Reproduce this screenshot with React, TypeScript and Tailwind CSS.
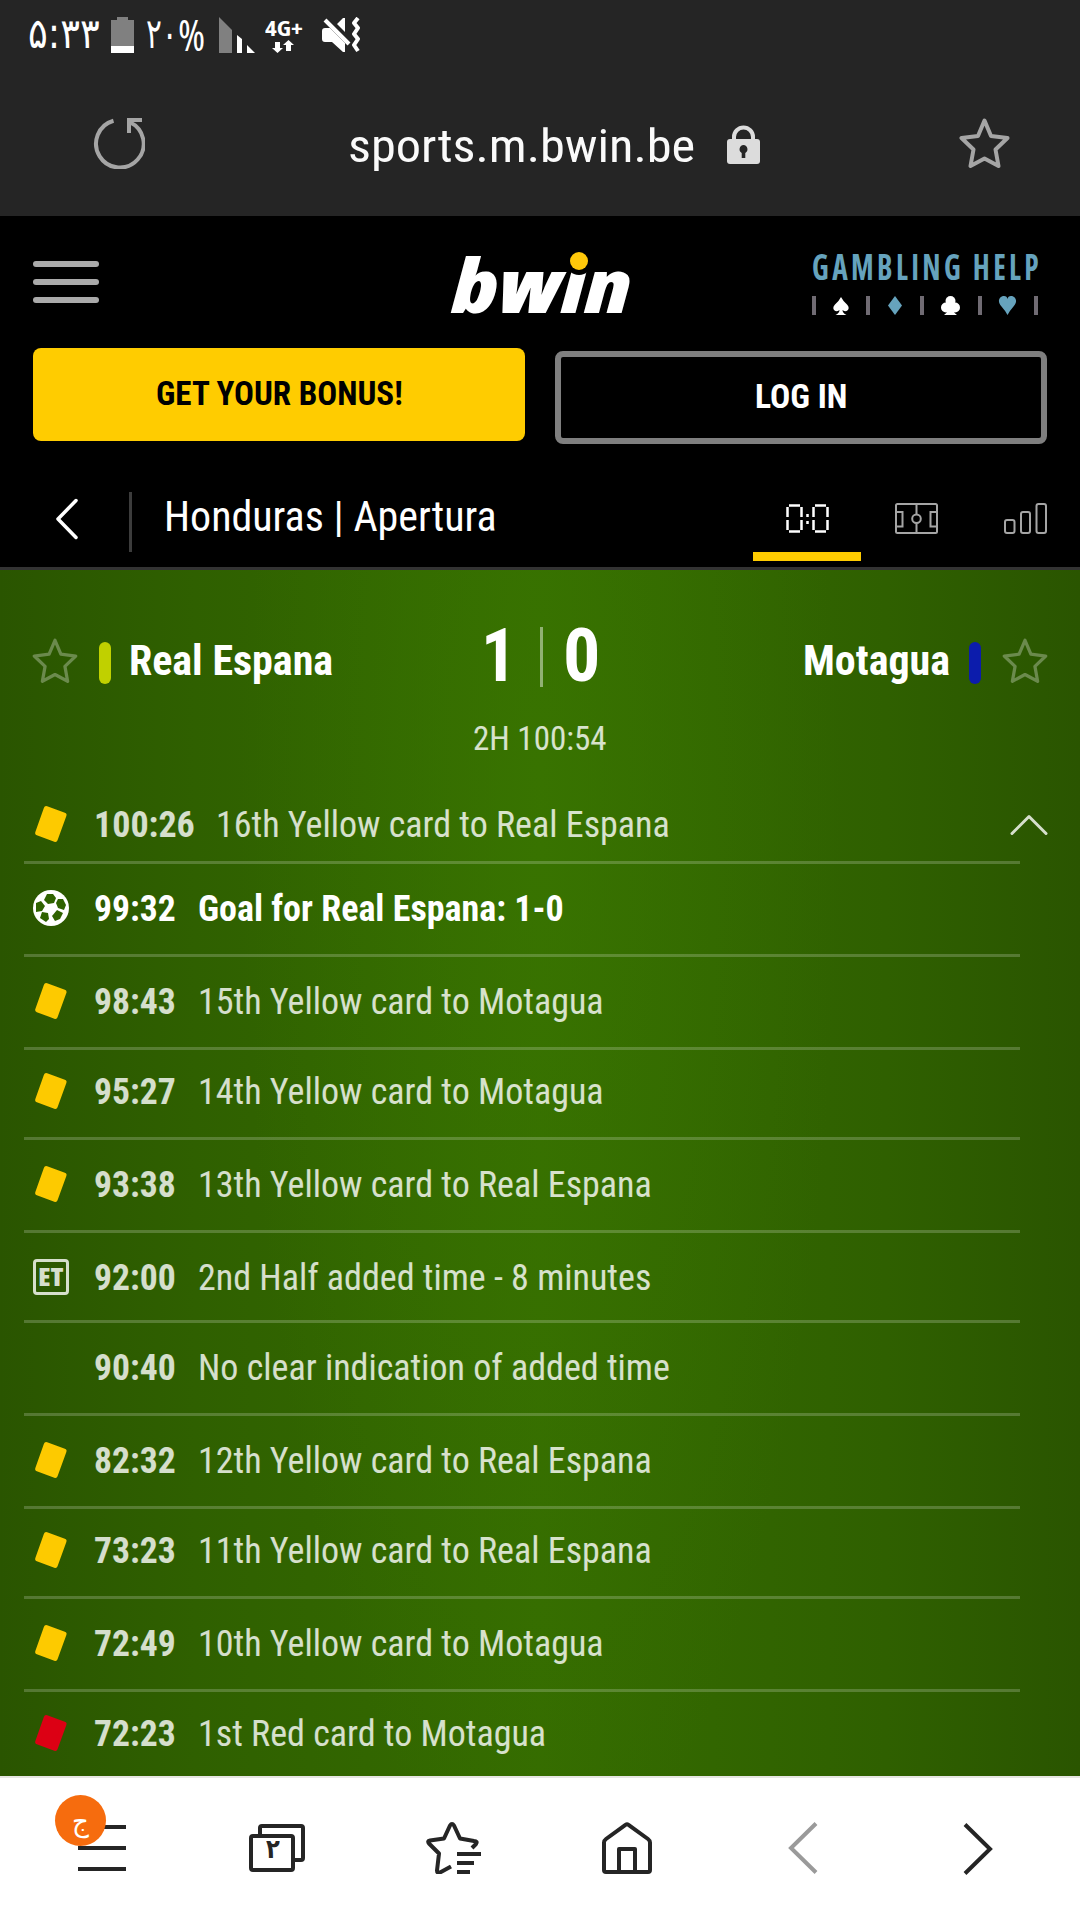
import { useLayoutEffect, useRef, useState } from "react";
import type { ReactNode } from "react";
import clsx from "clsx";

type EventType = "yellow" | "red" | "goal" | "et" | "none";

type MatchEvent = {
  time: string;
  text: string;
  type: EventType;
  width: number;
  row: string;
};

const events: MatchEvent[] = [
  { time: "99:32", text: "Goal for Real Espana: 1-0", type: "goal", width: 366, row: "h-[93px] border-b-[3px] pt-[15px]" },
  { time: "98:43", text: "15th Yellow card to Motagua", type: "yellow", width: 406, row: "h-[93px] border-b-[3px] pt-[15px]" },
  { time: "95:27", text: "14th Yellow card to Motagua", type: "yellow", width: 406, row: "h-[90px] border-b-[3px] pt-[12px]" },
  { time: "93:38", text: "13th Yellow card to Real Espana", type: "yellow", width: 454, row: "h-[93px] border-b-[3px] pt-[15px]" },
  { time: "92:00", text: "2nd Half added time - 8 minutes", type: "et", width: 453, row: "h-[90px] border-b-[3px] pt-[15px]" },
  { time: "90:40", text: "No clear indication of added time", type: "none", width: 472, row: "h-[93px] border-b-[3px] pt-[15px]" },
  { time: "82:32", text: "12th Yellow card to Real Espana", type: "yellow", width: 454, row: "h-[93px] border-b-[3px] pt-[15px]" },
  { time: "73:23", text: "11th Yellow card to Real Espana", type: "yellow", width: 454, row: "h-[90px] border-b-[3px] pt-[12px]" },
  { time: "72:49", text: "10th Yellow card to Motagua", type: "yellow", width: 406, row: "h-[93px] border-b-[3px] pt-[15px]" },
  { time: "72:23", text: "1st Red card to Motagua", type: "red", width: 348, row: "h-[84px] pt-[12px]" },
];

// Condenses a line of text so that it takes exactly `width` pixels
const Fit = ({ width, className, children }: { width: number; className?: string; children: ReactNode }) => {
  const ref = useRef<HTMLSpanElement>(null);
  const [scale, setScale] = useState(1);

  useLayoutEffect(() => {
    if (ref.current) setScale(width / ref.current.offsetWidth);
  }, [width]);

  return (
    <span className={clsx("block shrink-0 whitespace-nowrap", className)} style={{ width }}>
      <span ref={ref} className="inline-block origin-left" style={{ transform: `scaleX(${scale})` }}>
        {children}
      </span>
    </span>
  );
};

const StarOutline = ({ className }: { className?: string }) => (
  <svg viewBox="0 0 51 51" className={className} fill="none" stroke="currentColor" strokeLinejoin="round">
    <path d="M25.5 2.5 L32 18 L48.5 20 L36.5 31.5 L39.5 48 L25.5 40.5 L11.5 48 L14.5 31.5 L2.5 20 L19 18 Z" />
  </svg>
);

const StatusBar = () => (
  <div className="flex h-[72px] items-start pl-[28px] pt-[17px] text-white">
    <Fit width={72} className="-mt-[2px] font-['DejaVu_Sans',sans-serif] text-[42px] leading-[38px]">۵:۳۳</Fit>
    <svg width="23" height="36" viewBox="0 0 23 36" className="ml-[11px] shrink-0">
      <path d="M6 0h11v3h6v33H0V3h6z" fill="#808080" />
      <path d="M0 29h23v7H0z" fill="#fff" />
    </svg>
    <Fit width={32} className="-mt-[2px] ml-[12px] font-['DejaVu_Sans',sans-serif] text-[42px] leading-[38px]">۲۰</Fit>
    <Fit width={27} className="font-['Open_Sans',sans-serif] text-[43px] font-medium leading-[36px]">%</Fit>
    <svg width="36" height="36" viewBox="0 0 36 36" className="ml-[14px] shrink-0">
      <path d="M0 0l13 13v23H0z" fill="#808080" />
      <path d="M18 18l5 4v14h-5zM28 28l8 8h-8z" fill="#fff" />
    </svg>
    <div className="ml-[10px] mt-[1px] w-[38px]">
      <Fit width={38} className="font-['Open_Sans',sans-serif] text-[21px] font-bold leading-[20px]">4G+</Fit>
      <svg width="22" height="13" viewBox="0 0 22 13" className="ml-[7px] mt-[2px]" fill="#fff">
        <path d="M3 2h5v6h3l-5.500 5L0 8h3zM14 11h5V5h3l-5.500-5L11 5h3z" />
      </svg>
    </div>
    <svg width="38" height="36" viewBox="0 0 38 36" className="ml-[19px] shrink-0">
      <path d="M0 14q0-3 3-3h5l15 15v9h-2L10 25H3q-3 0-3-3zM23 1v14l-8-8 6-6z" fill="#fff" />
      <path d="M3 3l24 24" stroke="#fff" strokeWidth="4" />
      <path d="M36 1l-4 5 4 5-4 6 4 5-4 6 4 6" fill="none" stroke="#fff" strokeWidth="4" strokeLinejoin="round" />
    </svg>
  </div>
);

const AddressBar = () => (
  <div className="flex h-[144px] items-start">
    <svg width="52" height="52" viewBox="0 0 52 52" className="ml-[93px] mt-[45px]" fill="none" stroke="#a5a5a5" strokeWidth="4">
      <path d="M20.500 3.800A23.800 23.800 0 1 0 37 5.200" />
      <path d="M36 16V3h13" />
    </svg>
    <Fit width={347} className="ml-[203px] mt-[44px] font-['Roboto',sans-serif] text-[46px] leading-[60px] text-[#fafafa]">
      sports.m.bwin.be
    </Fit>
    <svg width="33" height="39" viewBox="0 0 33 39" className="ml-[32px] mt-[53px]">
      <path d="M7 17V12a9.500 9.500 0 0 1 19 0v5" fill="none" stroke="#dcdcdc" strokeWidth="4" />
      <rect y="14" width="33" height="25" rx="3" fill="#dcdcdc" />
      <path d="M16.500 20a4.300 4.300 0 0 1 1.800 8v5h-3.600v-5a4.300 4.300 0 0 1 1.800-8z" fill="#252525" />
    </svg>
    <StarOutline className="ml-[199px] mt-[46px] size-[51px] stroke-[4] text-[#a5a5a5]" />
  </div>
);

const SiteHeader = () => (
  <div className="flex h-[132px] items-start">
    <div className="ml-[33px] mt-[45px] flex w-[66px] flex-col gap-[12px]">
      <div className="h-[6px] rounded-full bg-[#aaa]" />
      <div className="h-[6px] rounded-full bg-[#aaa]" />
      <div className="h-[6px] rounded-full bg-[#aaa]" />
    </div>
    <div className="relative ml-[353px] mt-[24px] h-[90px]">
      <Fit width={179} className="font-['Open_Sans',sans-serif] text-[74px] font-extrabold italic leading-[90px] text-white">
        bwin
      </Fit>
      <span className="absolute left-[118px] top-[12px] size-[18px] rounded-full bg-[#ffc80a] shadow-[0_1px_0_4px_#000]" />
    </div>
    <div className="ml-[182px] mt-[33px] w-[228px]">
      <Fit width={230} className="-ml-px font-['Open_Sans',sans-serif] text-[35px] font-bold leading-[36px] tracking-[4px] text-[#66a3bd]">
        GAMBLING HELP
      </Fit>
      <svg width="226" height="20" viewBox="0 0 226 20" className="-ml-px mt-[11px]">
        <path d="M0 0h4v19H0zM54 0h4v19h-4zM108 0h4v19h-4zM166 0h4v19h-4zM222 0h4v19h-4z" fill="#706b73" />
        <path d="M29 1q2 4 6 7.500c4 4 0 9-4.500 5.500q0 3 4 5h-11q4-2 4-5c-4.500 3.500-8.500-1.500-4.500-5.500Q27 5 29 1z" fill="#fff" />
        <path d="M83 0l7 9.500-7 9.500-7-9.500z" fill="#66a3bd" />
        <g fill="#fff">
          <circle cx="138.500" cy="5" r="5" />
          <circle cx="134" cy="11.500" r="5" />
          <circle cx="143" cy="11.500" r="5" />
          <path d="M137 8h3q0 8 5 11h-13q5-3 5-11z" />
        </g>
        <path d="M195.500 19q-2-4-6-8.500c-5.500-6-1-10.500 2.500-10.500q3 0 3.500 3 .5-3 3.500-3c3.500 0 8 4.500 2.500 10.500q-4 4.500-6 8.500z" fill="#66a3bd" />
      </svg>
    </div>
  </div>
);

const Buttons = () => (
  <div className="flex h-[132px] items-start gap-[30px] px-[33px] text-[34px] font-bold leading-none">
    <button className="flex h-[93px] w-[492px] shrink-0 items-center justify-center rounded-[8px] bg-[#ffcc00] pb-[3px] text-black">
      <Fit width={247} className="leading-[40px]">GET YOUR BONUS!</Fit>
    </button>
    <button className="mt-[3px] flex h-[93px] w-[492px] shrink-0 items-center justify-center rounded-[8px] border-[6px] border-[#7f7f7f] pb-[3px] text-white">
      <Fit width={92} className="leading-[40px]">LOG IN</Fit>
    </button>
  </div>
);

const EventNav = () => (
  <div className="flex h-[90px] items-start border-b-[3px] border-[#333]">
    <svg width="24" height="42" viewBox="0 0 24 42" className="ml-[55px] mt-[18px]" fill="none" stroke="#fff" strokeWidth="3.500" strokeLinecap="round" strokeLinejoin="round">
      <path d="M21 2.500L3 21l18 18.500" />
    </svg>
    <div className="ml-[50px] mt-[12px] h-[60px] w-[3px] bg-[#3c3c3c]" />
    <Fit width={333} className="ml-[32px] mt-[7px] text-[42px] leading-[60px] text-white">Honduras | Apertura</Fit>
    <div className="ml-auto mr-[33px] mt-[23px] flex">
      <div className="mr-[34px] flex h-[58px] w-[108px] flex-col items-center justify-between border-b-[9px] border-[#ffcc00]">
        <svg width="43" height="29" viewBox="0 0 43 29" className="mt-[1px]" fill="none" stroke="#fff" strokeWidth="2.500">
          <path d="M3 1.500h11M3 27.500h11M1.500 3v10M1.500 16v10M15.500 3v10M15.500 16v10" />
          <path d="M29 1.500h11M29 27.500h11M27.500 3v10M27.500 16v10M41.500 3v10M41.500 16v10" />
          <path d="M21.500 10v3M21.500 17v3" />
        </svg>
      </div>
      <svg width="43" height="31" viewBox="0 0 43 31" fill="none" stroke="#a5a5a5" strokeWidth="2">
        <rect x="1" y="1" width="41" height="29" rx="1.500" />
        <path d="M21.500 1v10.500M21.500 20v10M1 9h6.500v14.500H1M42 9h-6.500v14.500H42" />
        <circle cx="21.500" cy="15.700" r="4.300" />
      </svg>
      <svg width="43" height="31" viewBox="0 0 43 31" className="ml-[66px]" fill="none" stroke="#a5a5a5" strokeWidth="2">
        <rect x="1" y="17" width="9.500" height="13" rx="2" />
        <rect x="17" y="9" width="9" height="21" rx="2" />
        <rect x="32.500" y="1" width="9.500" height="29" rx="2" />
      </svg>
    </div>
  </div>
);

const Scoreboard = () => (
  <div className="h-[216px]">
    <div className="flex h-[140px] items-start text-[42px] font-bold text-white">
      <StarOutline className="ml-[32px] mt-[68px] size-[46px] stroke-[3.600] text-white/30" />
      <div className="ml-[21px] mt-[72px] h-[42px] w-[12px] rounded-full bg-[#c0d000]" />
      <Fit width={204} className="ml-[18px] mt-[61px] leading-[60px]">Real Espana</Fit>
      <Fit width={35} className="ml-[148px] mt-[46px] text-[74px] leading-[80px]">1</Fit>
      <div className="ml-[24px] mt-[57px] h-[60px] w-[3px] bg-white/45" />
      <Fit width={37} className="ml-[20px] mt-[46px] text-[74px] leading-[80px]">0</Fit>
      <Fit width={147} className="ml-[203px] mt-[61px] leading-[60px]">Motagua</Fit>
      <div className="ml-[19px] mt-[72px] h-[42px] w-[12px] rounded-full bg-[#0c1cac]" />
      <StarOutline className="ml-[21px] mt-[68px] size-[46px] stroke-[3.600] text-white/30" />
    </div>
    <div className="flex justify-center">
      <Fit width={134} className="mt-[8px] text-[34px] leading-[40px] text-white/80">2H 100:54</Fit>
    </div>
  </div>
);

const Card = ({ color }: { color: string }) => (
  <svg width="36" height="38" viewBox="0 0 36 38">
    <path d="M13.300 3.600L31 10.200L22.200 34.300L4.700 27.800Z" fill={color} stroke={color} strokeWidth="5" strokeLinejoin="round" />
  </svg>
);

const EventIcon = ({ type }: { type: EventType }) => {
  if (type === "yellow") return <Card color="#fdca00" />;
  if (type === "red") return <Card color="#dc0014" />;
  if (type === "goal") {
    return (
      <svg width="36" height="36" viewBox="0 0 36 36" className="mt-px">
        <circle cx="18" cy="18" r="18" fill="#fff" />
        <g fill="#2f6200">
          <path d="M14 4h6l3 4-2 5-6 1-4-4z" />
          <path d="M25 9l5 0 3 6-2 5-6-2-2-5z" />
          <path d="M24 20l6 3-3 6-5 2-3-5z" />
          <path d="M9 22l6 1 1 6-3 3-6-4z" />
          <path d="M3 13l5-2 4 5-3 5-6 1z" />
        </g>
        <path d="M16 14l6 0 2 5-5 4-5-4z" fill="#fff" />
      </svg>
    );
  }
  if (type === "et") {
    return (
      <div className="mt-px flex size-[36px] items-center justify-center rounded-[4px] border-[3px] border-[#d6dfcc] text-[#d6dfcc]">
        <Fit width={26} className="font-['Open_Sans',sans-serif] text-[24px] font-extrabold leading-[26px]">ET</Fit>
      </div>
    );
  }
  return null;
};

const EventList = () => (
  <div>
    <div className="flex h-[78px]">
      <div className="ml-[24px] flex w-[996px] shrink-0 items-start border-b-[3px] border-white/20 pt-[9px]">
        <div className="ml-[9px] mt-[10px] w-[36px]">
          <EventIcon type="yellow" />
        </div>
        <Fit width={101} className="ml-[25px] text-[36px] font-bold leading-[60px] text-white/80">100:26</Fit>
        <Fit width={454} className="ml-[21px] text-[36px] leading-[60px] text-white/80">16th Yellow card to Real Espana</Fit>
      </div>
      <svg width="38" height="22" viewBox="0 0 38 22" className="-ml-[10px] mt-[28px] shrink-0" fill="none" stroke="#d6dfcc" strokeWidth="3" strokeLinecap="round" strokeLinejoin="round">
        <path d="M2 19.500L19 2.500l17 17" />
      </svg>
    </div>
    {events.map((event) => (
      <div
        key={event.time}
        className={clsx(
          "ml-[24px] flex w-[996px] items-start border-white/20 text-[36px] leading-[60px]",
          event.row,
          event.type === "goal" ? "font-bold text-white" : "text-white/80"
        )}
      >
        <div className="ml-[9px] mt-[10px] w-[36px]">
          <EventIcon type={event.type} />
        </div>
        <Fit width={82} className="ml-[25px] font-bold">{event.time}</Fit>
        <Fit width={event.width} className="ml-[22px]">{event.text}</Fit>
      </div>
    ))}
  </div>
);

const BottomBar = () => (
  <div className="flex h-[144px] items-start border-t-2 border-[#e6e6e2] bg-white text-[#252525]">
    <div className="relative ml-[78px] mt-[47px] flex w-[48px] flex-col gap-[17px]">
      <div className="h-[4px] bg-[#252525]" />
      <div className="h-[4px] bg-[#252525]" />
      <div className="h-[4px] bg-[#252525]" />
      <div className="absolute -left-[23px] -top-[30px] flex size-[51px] items-center justify-center rounded-full bg-[#f66c0e] font-['DejaVu_Sans',sans-serif] text-[29px] leading-[30px] text-white">
        ج
      </div>
    </div>
    <div className="relative ml-[123px] mt-[46px] h-[48px] w-[56px]">
      <svg width="56" height="48" viewBox="0 0 56 48" fill="none" stroke="currentColor" strokeWidth="4">
        <rect x="2" y="12" width="42" height="34" rx="2" />
        <path d="M11 12V4q0-2 2-2h39q2 0 2 2v30q0 2-2 2h-8" />
      </svg>
      <span className="absolute left-[17px] top-[12px] font-['DejaVu_Sans',sans-serif] text-[27px] font-bold leading-[26px]">
        <Fit width={14}>۲</Fit>
      </span>
    </div>
    <svg width="56" height="52" viewBox="0 0 56 52" className="ml-[121px] mt-[44px]" fill="none" stroke="currentColor" strokeWidth="4" strokeLinejoin="round">
      <path d="M46 26l4-4q2-3-2-3l-14-2.500-6-13q-2-3-4 0l-6 13-14 2q-3 .5-1 3l10 10-2 17q0 3 3 2l11-6" />
      <path d="M31 32h24M31 41h17M31 50h13" />
    </svg>
    <svg width="50" height="52" viewBox="0 0 50 52" className="ml-[120px] mt-[44px]" fill="none" stroke="currentColor" strokeWidth="4" strokeLinejoin="round">
      <path d="M2 20.500q0-2 2-3.500L23.500 2.800q1.500-1 3 0L46 17q2 1.500 2 3.500V48q0 2-2 2H4q-2 0-2-2z" />
      <path d="M17 50V27h16v23" />
    </svg>
    <svg width="30" height="52" viewBox="0 0 30 52" className="ml-[136px] mt-[44px]" fill="none" stroke="#9a9a9a" strokeWidth="4">
      <path d="M28 1.500L3 26l25 24.500" />
    </svg>
    <svg width="30" height="52" viewBox="0 0 30 52" className="ml-[145px] mt-[45px]" fill="none" stroke="currentColor" strokeWidth="4">
      <path d="M2 1.500L27 26L2 50.500" />
    </svg>
  </div>
);

export default function App() {
  return (
    <div className="h-[1920px] w-[1080px] overflow-hidden bg-black font-['Roboto_Condensed','Roboto',sans-serif] [font-stretch:75%]">
      <div className="bg-[#252525]">
        <StatusBar />
        <AddressBar />
      </div>
      <SiteHeader />
      <Buttons />
      <EventNav />
      <div className="h-[1206px] bg-[radial-gradient(300px_1100px_at_50%_20%,rgba(60,124,0,0.45),rgba(60,124,0,0)),linear-gradient(90deg,#2a5500_0%,#2f6000_18%,#356c00_50%,#2f6000_82%,#2a5500_100%)]">
        <Scoreboard />
        <EventList />
      </div>
      <BottomBar />
    </div>
  );
}
